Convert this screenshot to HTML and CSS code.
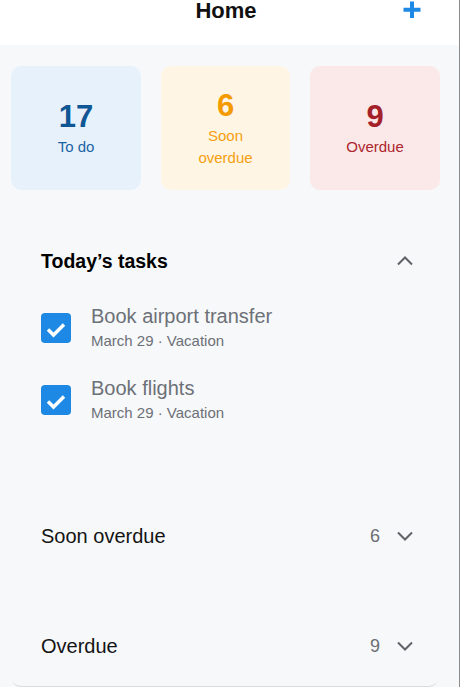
FILE: index.html
```html
<!DOCTYPE html>
<html lang="en">
<head>
<meta charset="utf-8">
<title>Home</title>
<link rel="stylesheet" href="styles.css">
</head>
<body>
<div class="app">
  <header class="topbar">
    <span class="spacer"></span>
    <h1 class="title">Home</h1>
    <button class="add" aria-label="Add">
      <svg width="18" height="18" viewBox="0 0 18 18"><rect x="7" y="0.5" width="4" height="16.5" fill="#1e88e5"/><rect x="0.5" y="6.75" width="17" height="4" fill="#1e88e5"/></svg>
    </button>
  </header>

  <section class="stats">
    <div class="stat stat-todo"><div class="num">17</div><div class="label">To do</div></div>
    <div class="stat stat-soon"><div class="num">6</div><div class="label">Soon<br>overdue</div></div>
    <div class="stat stat-over"><div class="num">9</div><div class="label">Overdue</div></div>
  </section>

  <div class="card">
    <div class="group group-open">
      <div class="group-head">
        <span class="group-title bold">Today’s tasks</span>
        <span class="group-meta">
          <svg class="chev" width="18" height="18" viewBox="0 0 18 18"><path d="M2 12.5 L9 5.5 L16 12.5" fill="none" stroke="#5f6368" stroke-width="2"/></svg>
        </span>
      </div>
      <ul class="tasks">
        <li class="task">
          <span class="check"><svg width="30" height="30" viewBox="0 0 30 30"><path d="M7 16.5 L12.5 22 L23 11.5" fill="none" stroke="#fff" stroke-width="3.5"/></svg></span>
          <div class="task-text">
            <div class="task-title">Book airport transfer</div>
            <div class="task-sub">March 29 · Vacation</div>
          </div>
        </li>
        <li class="task">
          <span class="check"><svg width="30" height="30" viewBox="0 0 30 30"><path d="M7 16.5 L12.5 22 L23 11.5" fill="none" stroke="#fff" stroke-width="3.5"/></svg></span>
          <div class="task-text">
            <div class="task-title">Book flights</div>
            <div class="task-sub">March 29 · Vacation</div>
          </div>
        </li>
      </ul>
    </div>
    <div class="group">
      <div class="group-head">
        <span class="group-title">Soon overdue</span>
        <span class="group-meta">
          <span class="count">6</span>
          <svg class="chev" width="18" height="18" viewBox="0 0 18 18"><path d="M2 5.5 L9 12.5 L16 5.5" fill="none" stroke="#5f6368" stroke-width="2"/></svg>
        </span>
      </div>
    </div>
    <div class="group group-last">
      <div class="group-head">
        <span class="group-title">Overdue</span>
        <span class="group-meta">
          <span class="count">9</span>
          <svg class="chev" width="18" height="18" viewBox="0 0 18 18"><path d="M2 5.5 L9 12.5 L16 5.5" fill="none" stroke="#5f6368" stroke-width="2"/></svg>
        </span>
      </div>
    </div>
  </div>
</div>
</body>
</html>
```

FILE: styles.css
```css
* { box-sizing: border-box; }
html, body { margin: 0; padding: 0; }
body {
  background: #f7f8fa;
  font-family: "Liberation Sans", Arial, sans-serif;
  color: #1a1a1a;
}
.app {
  width: 460px;
  height: 687px;
  overflow: hidden;
  border-right: 1px solid #8c8c8c;
  background: #f7f8fa;
}
.topbar {
  height: 45px;
  background: #fff;
  display: grid;
  grid-template-columns: 1fr auto 1fr;
  align-items: start;
  padding-right: 7px;
}
.title {
  margin: 0;
  font-size: 22px;
  line-height: 22px;
  font-weight: bold;
  color: #111;
}
.add {
  justify-self: end;
  margin: 1px 31px 0 0;
  padding: 0;
  border: 0;
  background: none;
  width: 18px;
  height: 18px;
  display: block;
}
.add svg { display: block; }

.stats {
  display: grid;
  grid-template-columns: 130px 129px 130px;
  gap: 20px;
  padding: 21px 0 0 11px;
}
.stat {
  height: 124px;
  border-radius: 10px;
  display: flex;
  flex-direction: column;
  align-items: center;
  justify-content: center;
  text-align: center;
}
.num {
  font-size: 31px;
  line-height: 38px;
  font-weight: bold;
}
.label {
  font-size: 15px;
  line-height: 22px;
}
.stat-todo { background: #e7f1fb; }
.stat-todo .num { color: #0f5694; }
.stat-todo .label { color: #1a64a3; }
.stat-soon { background: #fff5e5; }
.stat-soon .num { color: #f39a00; }
.stat-soon .label { color: #f5a00f; }
.stat-over { background: #fbe9e9; }
.stat-over .num { color: #a5212a; }
.stat-over .label { color: #ad262d; }

.card {
  margin: 21px 20px 0 11px;
  height: 475px;
  border-radius: 0 0 10px 10px;
  background: #f7f8fa;
  box-shadow: 0 2px 1px -1px rgba(0,0,0,0.13);
  padding: 0 25px 0 30px;
}
.group { padding: 22px 0 32px; }
.group-open { padding-bottom: 50px; }
.group-last { padding-bottom: 12px; }
.group-head {
  height: 56px;
  display: flex;
  align-items: center;
  justify-content: space-between;
}
.group-title {
  font-size: 20px;
  line-height: 23px;
  color: #141414;
}
.group-title.bold { font-weight: bold; font-size: 19.5px; color: #000; }
.group-meta {
  display: flex;
  align-items: center;
  gap: 16px;
}
.count {
  font-size: 18px;
  color: #6b6f75;
  line-height: 20px;
}
.chev { display: block; }

.tasks {
  list-style: none;
  margin: 3px 0 0;
  padding: 0;
}
.task {
  height: 72px;
  display: flex;
  align-items: center;
  gap: 20px;
}
.check {
  width: 30px;
  height: 30px;
  border-radius: 4px;
  background: #1e88e5;
  flex: none;
}
.check svg { display: block; }
.task-text {
  display: flex;
  flex-direction: column;
  padding-bottom: 2px;
}
.task-title {
  font-size: 20px;
  line-height: 24px;
  color: #6c7077;
}
.task-sub {
  font-size: 15px;
  line-height: 20px;
  color: #6c7077;
  margin-top: 3px;
}
```
